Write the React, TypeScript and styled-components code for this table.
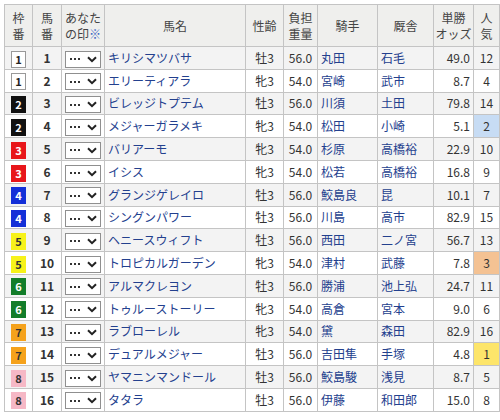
import styled, { createGlobalStyle } from "styled-components";

const GlobalStyle = createGlobalStyle`
  body {
    margin: 0;
    background: #fff;
    font-family: "Noto Sans CJK JP", "Liberation Sans", sans-serif;
    color: #333;
  }
`;

const Page = styled.div`
  padding: 4px 0 0 4px;
`;

const Table = styled.table`
  border-collapse: collapse;
  table-layout: fixed;
  width: 495px;
  font-size: 12px;
  border: 1px solid #c4c4c4;
`;

const Th = styled.th`
  height: 41px;
  padding: 0;
  background: #efefed;
  border: 1px solid #c4c4c4;
  font-weight: normal;
  line-height: 16px;
  color: #444;
  text-align: center;
`;

const Note = styled.span`
  color: #3a66c4;
`;

const Row = styled.tr<{ $odd: boolean }>`
  height: 22.8px;
  background: ${(p) => (p.$odd ? "#f3f3f3" : "#fff")};
`;

const Td = styled.td<{ $align?: string; $bg?: string }>`
  padding: 0 3px;
  border: 1px solid #c4c4c4;
  text-align: ${(p) => p.$align || "center"};
  background: ${(p) => p.$bg || "transparent"};
  white-space: nowrap;
  overflow: hidden;
  line-height: 18px;
`;

const Link = styled.span`
  color: #23408e;
`;

const Num = styled.span`
  font-weight: bold;
  color: #333;
`;

const frameColors: Record<number, [string, string, string]> = {
  1: ["#fff", "#222", "#999"],
  2: ["#111", "#fff", "#111"],
  3: ["#e8161a", "#fff", "#e8161a"],
  4: ["#1430d8", "#fff", "#1430d8"],
  5: ["#f7f21a", "#333", "#f7f21a"],
  6: ["#137d2a", "#fff", "#137d2a"],
  7: ["#f5a21c", "#333", "#f5a21c"],
  8: ["#f6b8c6", "#333", "#f6b8c6"],
};

const Frame = styled.span<{ $n: number }>`
  display: inline-flex;
  align-items: center;
  justify-content: center;
  width: 13px;
  height: 15px;
  font-size: 11px;
  line-height: 1;
  font-weight: bold;
  background: ${(p) => frameColors[p.$n][0]};
  color: ${(p) => frameColors[p.$n][1]};
  border: 1px solid ${(p) => frameColors[p.$n][2]};
  vertical-align: middle;
`;

const Mark = styled.span`
  display: inline-flex;
  align-items: center;
  justify-content: space-between;
  box-sizing: border-box;
  width: 36px;
  height: 17px;
  padding: 0 3px 0 4px;
  border: 1px solid #8f8f8f;
  background: #fff;
  vertical-align: middle;
  line-height: 1;
  color: #333;
`;

const Dots = styled.span`
  display: flex;
  gap: 2px;
`;

const Dot = styled.i`
  width: 2px;
  height: 2px;
  background: #333;
`;

const Chevron = () => (
  <svg width="10" height="7" viewBox="0 0 10 7">
    <path d="M1 1.2 L5 5.2 L9 1.2" fill="none" stroke="#222" strokeWidth="2" />
  </svg>
);

const popBg: Record<number, string> = {
  1: "#fde56a",
  2: "#c7dcf4",
  3: "#f4c293",
};

type Horse = [number, number, string, string, string, string, string, string, number];

const horses: Horse[] = [
  [1, 1, "キリシマツバサ", "牡3", "56.0", "丸田", "石毛", "49.0", 12],
  [1, 2, "エリーティアラ", "牝3", "54.0", "宮崎", "武市", "8.7", 4],
  [2, 3, "ビレッジトプテム", "牡3", "56.0", "川須", "土田", "79.8", 14],
  [2, 4, "メジャーガラメキ", "牝3", "54.0", "松田", "小崎", "5.1", 2],
  [3, 5, "バリアーモ", "牝3", "54.0", "杉原", "高橋裕", "22.9", 10],
  [3, 6, "イシス", "牝3", "54.0", "松若", "高橋裕", "16.8", 9],
  [4, 7, "グランジゲレイロ", "牡3", "56.0", "鮫島良", "昆", "10.1", 7],
  [4, 8, "シングンパワー", "牡3", "56.0", "川島", "高市", "82.9", 15],
  [5, 9, "ヘニースウィフト", "牡3", "56.0", "西田", "二ノ宮", "56.7", 13],
  [5, 10, "トロピカルガーデン", "牝3", "54.0", "津村", "武藤", "7.8", 3],
  [6, 11, "アルマクレヨン", "牡3", "56.0", "勝浦", "池上弘", "24.7", 11],
  [6, 12, "トゥルーストーリー", "牝3", "54.0", "高倉", "宮本", "9.0", 6],
  [7, 13, "ラブローレル", "牝3", "54.0", "黛", "森田", "82.9", 16],
  [7, 14, "デュアルメジャー", "牡3", "56.0", "吉田隼", "手塚", "4.8", 1],
  [8, 15, "ヤマニンマンドール", "牡3", "56.0", "鮫島駿", "浅見", "8.7", 5],
  [8, 16, "タタラ", "牡3", "56.0", "伊藤", "和田郎", "15.0", 8],
];

const widths = [28, 29, 43, 141, 38, 34, 60, 56, 40, 26];

export default function App() {
  return (
    <Page>
      <GlobalStyle />
      <Table>
        <colgroup>
          {widths.map((w, i) => (
            <col key={i} style={{ width: w }} />
          ))}
        </colgroup>
        <thead>
          <tr>
            <Th>枠<br />番</Th>
            <Th>馬<br />番</Th>
            <Th>あなた<br />の印<Note>※</Note></Th>
            <Th>馬名</Th>
            <Th>性齢</Th>
            <Th>負担<br />重量</Th>
            <Th>騎手</Th>
            <Th>厩舎</Th>
            <Th>単勝<br />オッズ</Th>
            <Th>人<br />気</Th>
          </tr>
        </thead>
        <tbody>
          {horses.map((h, i) => (
            <Row key={h[1]} $odd={i % 2 === 0}>
              <Td><Frame $n={h[0]}>{h[0]}</Frame></Td>
              <Td><Num>{h[1]}</Num></Td>
              <Td>
                <Mark>
                  <Dots><Dot /><Dot /><Dot /></Dots>
                  <Chevron />
                </Mark>
              </Td>
              <Td $align="left"><Link>{h[2]}</Link></Td>
              <Td>{h[3]}</Td>
              <Td>{h[4]}</Td>
              <Td $align="left"><Link>{h[5]}</Link></Td>
              <Td $align="left"><Link>{h[6]}</Link></Td>
              <Td $align="right">{h[7]}</Td>
              <Td $bg={popBg[h[8]]}>{h[8]}</Td>
            </Row>
          ))}
        </tbody>
      </Table>
    </Page>
  );
}
